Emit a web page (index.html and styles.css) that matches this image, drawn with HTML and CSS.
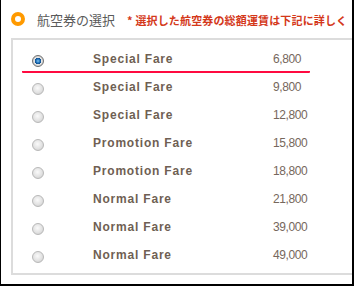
FILE: index.html
```html
<!DOCTYPE html>
<html lang="ja">
<head>
<meta charset="utf-8">
<title>航空券の選択</title>
<link rel="stylesheet" href="styles.css">
</head>
<body>
<div class="frame">
  <div class="header">
    <span class="ring"></span>
    <span class="titles">
      <span class="title">航空券の選択</span>
      <span class="note">* 選択した航空券の総額運賃は下記に詳しく</span>
    </span>
  </div>
  <div class="box">
    <div class="row selected"><span class="radio on"></span><span class="label">Special Fare</span><span class="price">6,800</span></div>
    <div class="row"><span class="radio"></span><span class="label">Special Fare</span><span class="price">9,800</span></div>
    <div class="row"><span class="radio"></span><span class="label">Special Fare</span><span class="price">12,800</span></div>
    <div class="row"><span class="radio"></span><span class="label">Promotion Fare</span><span class="price">15,800</span></div>
    <div class="row"><span class="radio"></span><span class="label">Promotion Fare</span><span class="price">18,800</span></div>
    <div class="row"><span class="radio"></span><span class="label">Normal Fare</span><span class="price">21,800</span></div>
    <div class="row"><span class="radio"></span><span class="label">Normal Fare</span><span class="price">39,000</span></div>
    <div class="row"><span class="radio"></span><span class="label">Normal Fare</span><span class="price">49,000</span></div>
  </div>
</div>
</body>
</html>
```

FILE: styles.css
```css
html, body {
  margin: 0;
  padding: 0;
  background: #fff;
}

.frame {
  width: 354px;
  height: 286px;
  box-sizing: border-box;
  border-left: 1px solid #000;
  border-right: 2px solid #000;
  border-bottom: 2px solid #000;
  overflow: hidden;
  background: #fff;
}

.header {
  height: 38px;
  box-sizing: border-box;
  padding-left: 10px;
  display: flex;
  align-items: center;
  white-space: nowrap;
}

.ring {
  flex: none;
  width: 14px;
  height: 14px;
  box-sizing: border-box;
  border: 4px solid #ff9a00;
  border-radius: 50%;
  background: #fff;
}

.titles {
  display: flex;
  align-items: baseline;
  margin-left: 12px;
  margin-top: 1px;
  font-family: "Noto Sans CJK JP", sans-serif;
}

.title {
  font-size: 13px;
  color: #5a5a5a;
}

.note {
  margin-left: 12px;
  font-size: 11px;
  letter-spacing: 0.15px;
  font-weight: bold;
  color: #d4381a;
}

.box {
  width: 380px;
  box-sizing: border-box;
  margin-left: 10px;
  border: 2px solid #dcdcdc;
  padding: 5px 0 4px 9px;
}

.row {
  width: 288px;
  height: 28px;
  box-sizing: border-box;
  padding-left: 10px;
  display: grid;
  grid-template-columns: 12px 131px auto;
  column-gap: 49px;
  align-items: start;
  line-height: 28px;
  font-family: "Liberation Sans", Arial, sans-serif;
}

.row.selected {
  background: linear-gradient(#ff0a40, #ff0a40) left bottom / 100% 2px no-repeat;
  border-radius: 0 0 1px 1px;
}

.radio {
  width: 12px;
  height: 12px;
  box-sizing: border-box;
  margin-top: 10px;
  border-radius: 50%;
  border: 1px solid #b8b8b8;
  background: radial-gradient(circle at 45% 40%, #fafafa 0, #e2e2e2 55%, #c8c8c8 100%);
}

.radio.on {
  border: 1px solid #707070;
  background: radial-gradient(circle at 50% 50%, #7fc4f0 0, #1f6fb8 28%, #0d4f8f 42%, #e8e8e8 48%, #c4c4c4 80%, #9a9a9a 100%);
}

.label {
  font-size: 12px;
  font-weight: bold;
  letter-spacing: 0.8px;
  color: #6f5f53;
}

.price {
  font-size: 12px;
  letter-spacing: -0.4px;
  color: #76675c;
}
```
